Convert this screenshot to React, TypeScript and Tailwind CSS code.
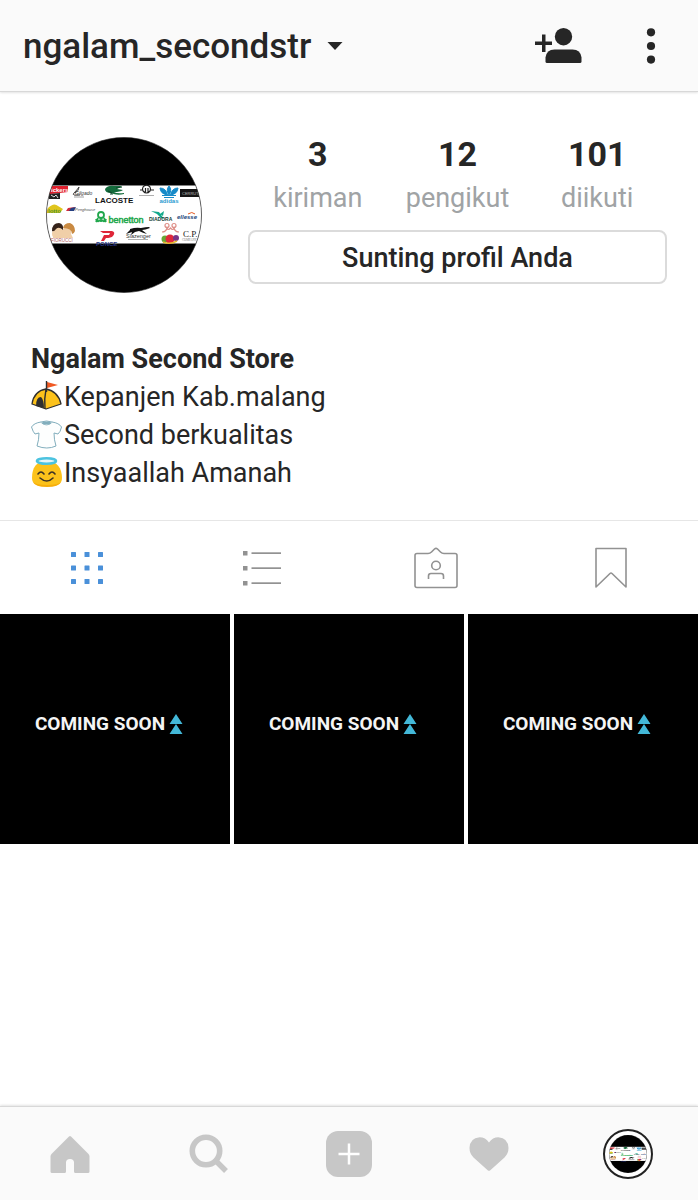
import type { ReactNode } from "react";

const STATS = [
  { value: "3", label: "kiriman" },
  { value: "12", label: "pengikut" },
  { value: "101", label: "diikuti" },
];

const POSTS = [1, 2, 3];

function BrandCollage() {
  return (
    <svg viewBox="0 0 156 156" className="block size-full" role="img" aria-label="Ngalam Second Store">
      <defs>
        <clipPath id="round">
          <circle cx="78" cy="78" r="77.5" />
        </clipPath>
      </defs>
      <g clipPath="url(#round)" fontFamily="'Liberation Sans', sans-serif">
        <rect width="156" height="156" fill="#000" />
        <rect y="48.5" width="156" height="58" fill="#fff" />
        {/* kickers */}
        <path d="M0 49h22v6l-17 2H0z" fill="#e0202e" />
        <text x="5" y="54.500" fontSize="6" fontWeight="bold" fill="#fff">ickers</text>
        <path d="M3 57l11-1v6H3z" fill="#222" />
        <path d="M5 58l3 2 2-2 2 3" stroke="#ddd" fill="none" />
        {/* swan */}
        <path d="M34 58q-9 1-6-2t5-6q0 4-4 6" stroke="#444" strokeWidth="1" fill="none" />
        <text x="29" y="57.500" fontSize="5" fontStyle="italic" fill="#333">Gilgado</text>
        <path d="M28 60h10" stroke="#888" strokeWidth=".8" />
        {/* crocodile */}
        <path d="M59 52q3-4 9-3l8 0-5 3 6 1q-3 2-9 2 3 2 10 1v1q-7 2-13-1-6 0-6-4z" fill="#146b3c" />
        <path d="M62 54l4 2M70 51l6-1M64 57h3" stroke="#0b4828" strokeWidth="1.200" />
        <text x="49" y="66" fontSize="8" fontWeight="bold" fill="#111">LACOSTE</text>
        {/* tacchini */}
        <path d="M97 54a4 4 0 1 1 7 0q-3.500 4-7 0M94 53h3M104 53h4M99.500 51v4M102 51v4" fill="none" stroke="#222" strokeWidth="1.200" />
        <path d="M93 58.500h15" stroke="#999" strokeWidth=".8" />
        {/* trefoil */}
        <path d="M123 49q3.500 4 0 9-3.500-5 0-9zM114 51q6 0 7.500 7-7-1-7.500-7zM132 51q-6 0-7.500 7 7-1 7.500-7z" fill="#168ac8" stroke="#168ac8" />
        <path d="M116 58.500h14M118 60.500h10" stroke="#168ac8" strokeWidth="1" />
        <text x="113.500" y="65.500" fontSize="6" fontWeight="bold" fill="#2b9bd0">adidas</text>
        {/* cerruti */}
        <rect x="134" y="52" width="22" height="8" fill="#151515" />
        <text x="136" y="58" fontSize="4" fill="#bbb">CERRUTI</text>
        {/* lotto */}
        <path d="M2 71q6-6 10-2l5 3-3 4H0z" fill="#e0c51d" />
        <text x="2" y="76" fontSize="6" fontWeight="bold" fill="#4f9834">lotto</text>
        {/* penghouse */}
        <path d="M22 71l7-1-2 4h-7z" fill="#d02c3c" />
        <path d="M25 71l5-1-2 4h-5z" fill="#243e80" />
        <text x="29" y="74" fontSize="4" fontStyle="italic" fill="#555">Penghouse</text>
        {/* benetton */}
        <g stroke="#21a74c" fill="none" strokeWidth="1.800">
          <circle cx="55" cy="78" r="3" />
          <path d="M52 81l-2 4M55 81v4M58 81l2 4M50 82q1 4 4 1M60 82q-1 4-4 1" />
        </g>
        <text x="62.500" y="86" fontSize="9" fill="#21a74c" stroke="#21a74c" strokeWidth=".5">benetton</text>
        {/* diadora */}
        <path d="M105 74l8 1 5 7-3-1-4-4zM114 77l4-3-1 5z" fill="#11a88a" />
        <text x="103" y="83.500" fontSize="5" fontWeight="bold" fill="#173c35">DIADORA</text>
        {/* ellesse */}
        <text x="131" y="82" fontSize="6" fontWeight="bold" fontStyle="italic" fill="#1d477b">ellesse</text>
        <path d="M142 77q4-3 7 0" stroke="#e25a22" fill="none" />
        {/* fiorucci */}
        <path d="M7 100q-2-3 0-7 1-4 5-4 4 1 4 4 3-4 7-3 3 3 2 7l2 4H7z" fill="#f0cfa8" />
        <path d="M6 94q0-8 7-8 5 1 4 7-4-4-7-1-2 3-4 2z" fill="#35221a" />
        <path d="M17 91q1-5 7-5 5 2 5 8-1 3-3 3 0-6-9-6z" fill="#c98a42" />
        <text x="5" y="104.500" fontSize="4.500" fill="#b36262">FIORUCCI</text>
        {/* prince */}
        <path d="M54 94h12q4 1 1 5-2 2-7 2l-2 3h-3l3-6h5l1-2h-7z" fill="#df2638" />
        <text x="50" y="109" fontSize="6" fontWeight="bold" fill="#263482">PONCE</text>
        {/* slazenger */}
        <path d="M84 92q6-2 11-1 5-1 8-1l1 1q-5 2-8 2l5 4q-4-1-8-3l-4 1-4 3 1-3-6 2 4-4z" fill="#111" />
        <text x="80" y="101" fontSize="5.500" fill="#333">Slazenger</text>
        <path d="M82 102.500h20" stroke="#777" strokeWidth=".6" />
        {/* kappa */}
        <g fill="none" stroke="#de8f88" strokeWidth="1.200">
          <circle cx="121" cy="88.500" r="2" />
          <circle cx="128" cy="88.500" r="2" />
          <path d="M116 95q4 0 5-4 1 3 3.500 0 2.500 3 3.500 0 1 4 5 4" />
        </g>
        {/* fruit of the loom */}
        <circle cx="119" cy="102" r="3.500" fill="#67a735" />
        <circle cx="124" cy="102" r="4.500" fill="#df283c" />
        <circle cx="130" cy="101" r="3" fill="#793486" />
        <path d="M117 105q7 3 14-1" stroke="#e6b92f" strokeWidth="1.500" fill="none" />
        {/* cp company */}
        <text x="137" y="100" fontSize="9" fill="#222" fontFamily="'Liberation Serif', serif">C.P.</text>
        <text x="136" y="104" fontSize="3" fill="#777" fontFamily="'Liberation Serif', serif">COMPANY</text>
      </g>
      <circle cx="78" cy="78" r="77.5" fill="none" stroke="#222" strokeWidth=".6" />
    </svg>
  );
}

function Tent() {
  return (
    <svg viewBox="0 0 33 34" className="h-[34px] w-[33px] shrink-0" role="img" aria-label="tenda">
      <path d="M1 24Q3 11 15 9q12 2 15 15L15 29z" fill="#fcc21b" stroke="#2f2f2f" strokeWidth="1.300" strokeLinejoin="round" />
      <path d="M15 9q-2 10-1 20" fill="none" stroke="#2f2f2f" strokeWidth="1.400" />
      <path d="M5 26q0-9 5-9 3 3 3 11z" fill="#2f2f2f" />
      <path d="M16 2l11 3-11 3z" fill="#f05a24" />
      <path d="M15.500 1v11" stroke="#2f2f2f" strokeWidth="1.400" />
    </svg>
  );
}

function Shirt() {
  return (
    <svg viewBox="0 0 33 34" className="h-[34px] w-[33px] shrink-0" role="img" aria-label="kaos">
      <path
        d="M10 4q5.500-2 11 0 7 1 9.500 5-1 5-3.500 7l-4-1q0 7 2 13-9 4-19 0 2-6 2-13l-4 1q-2-2-3.500-7Q3 5 10 4z"
        fill="#fdfefe"
        stroke="#82aebd"
        strokeWidth="1"
        strokeLinejoin="round"
      />
      <path d="M9.500 4q6 6 12 0" fill="none" stroke="#a9c8d1" />
      <ellipse cx="15.500" cy="5" rx="4.500" ry="1.500" fill="#82aebd" />
    </svg>
  );
}

function Halo() {
  return (
    <svg viewBox="0 0 33 34" className="h-[34px] w-[33px] shrink-0" role="img" aria-label="malaikat">
      <path d="M1 22C1 12 5 5 15.500 5S31 12 31 22c0 6-4 8-15 8S1 28 1 22z" fill="#fcc21b" />
      <path d="M2 26q3 3 14 3t14-3q-2 5-14 5T2 26z" fill="#f7ae0a" />
      <ellipse cx="15.500" cy="5" rx="9.500" ry="2.800" fill="#e6f5f8" stroke="#4cc3e0" strokeWidth="2.600" />
      <path d="M7 18q3-4 6 0M18 18q3-4 6 0M9 22q7 6 13 0" fill="none" stroke="#3b3226" strokeWidth="1.600" strokeLinecap="round" />
    </svg>
  );
}

function BioLine({ icon, children }: { icon: ReactNode; children: ReactNode }) {
  return (
    <p className="flex items-center">
      {icon}
      <span>{children}</span>
    </p>
  );
}

function Header() {
  return (
    <header className="flex h-[92px] items-center justify-between border-b border-[#d8d8d8] bg-[#fafafa] pr-[27px] pl-[23px] shadow-[0_1px_2px_#e4e4e4]">
      <button type="button" className="flex items-center gap-4 text-[35px] leading-10 font-medium">
        <span className="pt-0.5">ngalam_secondstr</span>
        <svg viewBox="0 0 16 8" className="h-2 w-4">
          <path d="M.5 0h15L8 8z" fill="#262626" />
        </svg>
      </button>
      <div className="flex items-center gap-12">
        <button type="button" aria-label="Temukan orang">
          <svg viewBox="0 0 48 36" className="h-9 w-12" fill="#262626">
            <circle cx="28.500" cy="8.700" r="8.700" />
            <path d="M10.500 33.500v-4q1-8 9-8h18q8 0 9 8v4q0 1.500-1.500 1.500H12q-1.500 0-1.500-1.500z" />
            <path d="M0 13.500h7V6.500h3.500v7h6.500V17h-6.500v7H7v-7H0z" />
          </svg>
        </button>
        <button type="button" aria-label="Opsi" className="flex w-10 justify-center">
          <svg viewBox="0 0 10 36" className="h-9 w-2.5" fill="#262626">
            <circle cx="5" cy="4.300" r="4.100" />
            <circle cx="5" cy="18" r="4.100" />
            <circle cx="5" cy="31.600" r="4.100" />
          </svg>
        </button>
      </div>
    </header>
  );
}

function Tabs() {
  return (
    <div className="grid h-[94px] grid-cols-4 border-t border-[#e6e6e6]">
      <button type="button" aria-label="Kisi" className="flex items-center justify-center">
        <svg viewBox="0 0 34 34" className="size-[34px]" fill="#4a90d9">
          {[1, 14.5, 28].map((y) =>
            [1, 14.5, 28].map((x) => <rect key={`${x}-${y}`} x={x} y={y} width="5" height="5" rx=".5" />),
          )}
        </svg>
      </button>
      <button type="button" aria-label="Daftar" className="flex items-center justify-center">
        <svg viewBox="0 0 40 36" className="h-9 w-10" fill="#929292">
          {[1, 16, 31].map((y) => (
            <g key={y}>
              <rect x="1" y={y} width="4.500" height="4.500" />
              <rect x="9.500" y={y + 1.3} width="29.500" height="1.700" />
            </g>
          ))}
        </svg>
      </button>
      <button type="button" aria-label="Foto Anda" className="flex items-center justify-center">
        <svg viewBox="0 0 46 42" className="h-[42px] w-[46px]" fill="none" stroke="#929292" strokeWidth="1.600" strokeLinejoin="round">
          <path d="M4 6.500h11q2 0 3.500-1.500l3-3q1.500-1.300 3 0l3 3Q29 6.500 31 6.500h11q2 0 2 2v30q0 2-2 2H4q-2 0-2-2v-30q0-2 2-2z" />
          <circle cx="23" cy="18.500" r="4.300" />
          <path d="M15.500 32v-3q0-2.500 2.500-2.500h10q2.500 0 2.500 2.500v3" />
        </svg>
      </button>
      <button type="button" aria-label="Tersimpan" className="flex items-center justify-center">
        <svg viewBox="0 0 34 42" className="h-[42px] w-[34px]" fill="none" stroke="#929292" strokeWidth="1.600" strokeLinejoin="round">
          <path d="M2 1.500h30V40L18 26.500q-1-1-2 0L2 40z" />
        </svg>
      </button>
    </div>
  );
}

function BottomNav() {
  return (
    <nav className="mt-auto grid h-[94px] grid-cols-5 border-t border-[#d8d8d8] bg-[#fafafa] text-[#c7c7c7] shadow-[0_-1px_2px_#e4e4e4]">
      <button type="button" aria-label="Beranda" className="flex items-center justify-center">
        <svg viewBox="0 0 40 38" className="h-[38px] w-10" fill="currentColor">
          <path d="M19 1.500q1-1 2 0L38.500 19q1 1 1 2.500v15q0 1.500-1.500 1.500H25.500q-1.500 0-1.500-1.500v-9q0-3.500-4-3.500t-4 3.500v9q0 1.500-1.500 1.500H2Q.5 38 .5 36.500v-15Q.5 20 1.500 19z" />
        </svg>
      </button>
      <button type="button" aria-label="Cari" className="flex items-center justify-center">
        <svg viewBox="0 0 40 40" className="size-10" fill="none" stroke="currentColor">
          <circle cx="17" cy="17" r="13.700" strokeWidth="5.600" />
          <path d="M26.500 26.500L37 37" strokeWidth="5.400" />
        </svg>
      </button>
      <button type="button" aria-label="Tambah" className="flex items-center justify-center">
        <svg viewBox="0 0 46 46" className="size-[46px]">
          <rect width="46" height="46" rx="12" fill="currentColor" />
          <path d="M12.500 23h21M23 12.500v21" stroke="#fff" strokeWidth="2.500" />
        </svg>
      </button>
      <button type="button" aria-label="Aktivitas" className="flex items-center justify-center">
        <svg viewBox="0 0 40 34" className="h-[34px] w-10" fill="currentColor">
          <path d="M18.700 33.300L4.500 20.500Q.5 16.500.5 11 1 .8 10.500.2q6 0 9.500 5.300Q23.500.2 29.500.2 39 .8 39.500 11q0 5.500-4 9.500L21.300 33.300q-1.300 1-2.600 0z" />
        </svg>
      </button>
      <button type="button" aria-label="Profil" className="flex items-center justify-center">
        <span className="flex size-[50px] items-center justify-center rounded-full border-2 border-[#222] bg-white">
          <span className="size-[38px]">
            <BrandCollage />
          </span>
        </span>
      </button>
    </nav>
  );
}

export default function App() {
  return (
    <div className="flex min-h-screen flex-col bg-white font-['Roboto',sans-serif] text-[#262626]">
      <Header />
      <main>
        <section className="flex pt-9 pr-[31px] pl-8">
          <div className="mt-[9px] mr-[46px] ml-3.5 size-[156px] shrink-0">
            <BrandCollage />
          </div>
          <div className="flex-1">
            <dl className="grid grid-cols-3 text-center">
              {STATS.map((s) => (
                <div key={s.label} className="flex flex-col-reverse">
                  <dt className="pt-0.5 text-[27px] leading-10 text-[#a0a3a5]">{s.label}</dt>
                  <dd className="pt-1 text-[34px] leading-11 font-bold">{s.value}</dd>
                </div>
              ))}
            </dl>
            <button type="button" className="mt-3 h-[54px] w-full rounded-lg border-2 border-[#dbdbdb] pt-0.5 text-[27px] font-medium">
              Sunting profil Anda
            </button>
          </div>
        </section>
        <section className="px-[31px] pt-[47px] pb-7 text-[27px] leading-[38px]">
          <h1 className="font-bold">Ngalam Second Store</h1>
          <BioLine icon={<Tent />}>Kepanjen Kab.malang</BioLine>
          <BioLine icon={<Shirt />}>Second berkualitas</BioLine>
          <BioLine icon={<Halo />}>Insyaallah Amanah</BioLine>
        </section>
        <Tabs />
        <div className="grid grid-cols-3 gap-1">
          {POSTS.map((id) => (
            <a
              key={id}
              href={`#post-${id}`}
              className="flex aspect-square items-center justify-center gap-1 bg-black pr-3 pb-2.5 text-[19px] font-bold text-[#f4f4f4]"
            >
              COMING SOON
              <svg viewBox="0 0 14 22" className="h-[22px] w-3.5" fill="#43b8d8">
                <path d="M7 1l6.500 10H.5zM7 11l6.500 10H.5z" />
              </svg>
            </a>
          ))}
        </div>
      </main>
      <BottomNav />
    </div>
  );
}
